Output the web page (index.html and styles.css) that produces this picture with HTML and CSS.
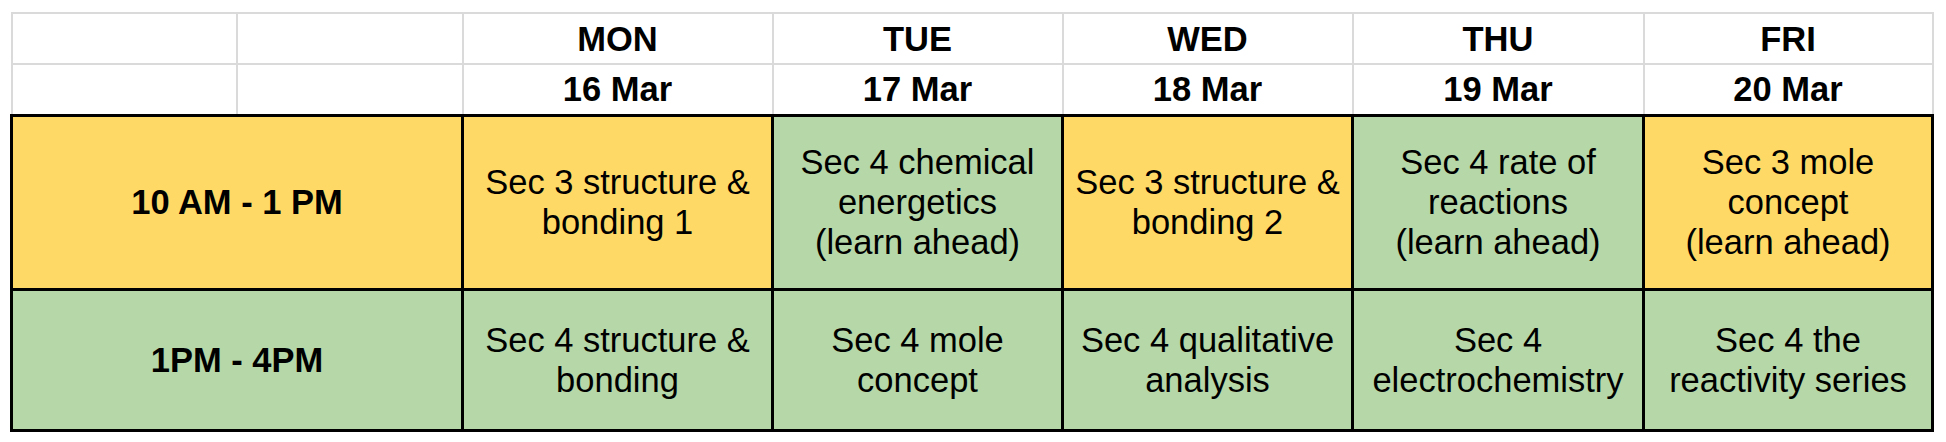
FILE: index.html
```html
<!DOCTYPE html>
<html>
<head>
<meta charset="utf-8">
<link rel="stylesheet" href="styles.css">
</head>
<body>
<table class="sheet">
  <colgroup>
    <col class="c-a"><col class="c-b"><col class="c-mon"><col class="c-tue"><col class="c-wed"><col class="c-thu"><col class="c-fri">
  </colgroup>
  <tr class="hrow">
    <td class="h"></td><td class="h"></td>
    <td class="h">MON</td><td class="h">TUE</td><td class="h">WED</td><td class="h">THU</td><td class="h">FRI</td>
  </tr>
  <tr class="hrow">
    <td class="h"></td><td class="h"></td>
    <td class="h">16 Mar</td><td class="h">17 Mar</td><td class="h">18 Mar</td><td class="h">19 Mar</td><td class="h">20 Mar</td>
  </tr>
  <tr class="brow1">
    <td class="b time yellow" colspan="2">10 AM - 1 PM</td>
    <td class="b yellow">Sec 3 structure &amp;<br>bonding 1</td>
    <td class="b green">Sec 4 chemical<br>energetics<br>(learn ahead)</td>
    <td class="b yellow">Sec 3 structure &amp;<br>bonding 2</td>
    <td class="b green">Sec 4 rate of<br>reactions<br>(learn ahead)</td>
    <td class="b yellow">Sec 3 mole<br>concept<br>(learn ahead)</td>
  </tr>
  <tr class="brow2">
    <td class="b time green" colspan="2">1PM - 4PM</td>
    <td class="b green">Sec 4 structure &amp;<br>bonding</td>
    <td class="b green">Sec 4 mole<br>concept</td>
    <td class="b green">Sec 4 qualitative<br>analysis</td>
    <td class="b green">Sec 4<br>electrochemistry</td>
    <td class="b green">Sec 4 the<br>reactivity series</td>
  </tr>
</table>
</body>
</html>
```

FILE: styles.css
```css
html, body {
  margin: 0;
  padding: 0;
  background: #ffffff;
}

body {
  padding: 12px 0 0 10px;
  font-family: "Liberation Sans", Arial, sans-serif;
  color: #000000;
}

.sheet {
  border-collapse: collapse;
  table-layout: fixed;
  width: 1922px;
}

.c-a { width: 225px; }
.c-b { width: 226px; }
.c-mon { width: 310px; }
.c-tue { width: 290px; }
.c-wed { width: 290px; }
.c-thu { width: 291px; }
.c-fri { width: 289px; }

td {
  padding: 0 4px;
  text-align: center;
  vertical-align: middle;
  font-size: 34.5px;
  line-height: 40px;
}

.h {
  border: 2px solid #dadada;
  font-weight: bold;
}

.hrow { height: 51px; }
.brow1 { height: 174px; }
.brow2 { height: 141px; }

.b {
  border: 3px solid #000000;
}

.time {
  font-weight: bold;
}

.yellow { background: #ffd966; }
.green { background: #b6d7a8; }
```
